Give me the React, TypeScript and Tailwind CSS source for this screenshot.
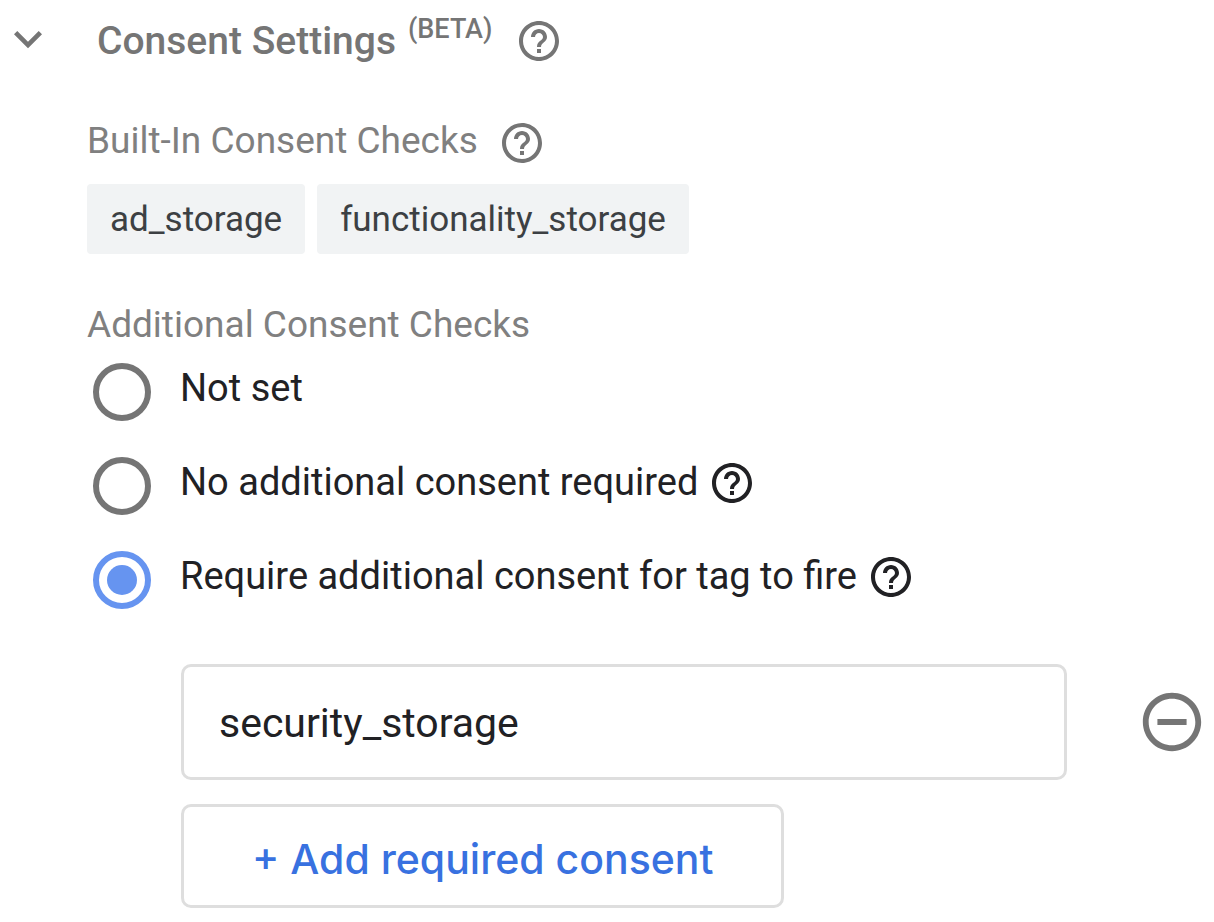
import { useState } from "react";

const HELP_PATH =
  "M11 18h2v-2h-2v2zm1-16C6.48 2 2 6.48 2 12s4.48 10 10 10 10-4.48 10-10S17.52 2 12 2zm0 18c-4.41 0-8-3.59-8-8s3.59-8 8-8 8 3.59 8 8-3.59 8-8 8zm0-14c-2.21 0-4 1.79-4 4h2c0-1.1.9-2 2-2s2 .9 2 2c0 2-3 1.75-3 5h2c0-2.25 3-2.5 3-5 0-2.21-1.79-4-4-4z";

function HelpButton({ label }: { label: string }) {
  return (
    <button type="button" aria-label={label} className="size-12 shrink-0">
      <svg viewBox="0 0 24 24" className="size-12 fill-current" aria-hidden="true">
        <path d={HELP_PATH} />
      </svg>
    </button>
  );
}

const builtInChecks = ["ad_storage", "functionality_storage"];

const options = [
  { id: "not-set", label: "Not set", help: "" },
  { id: "none-required", label: "No additional consent required", help: "About no additional consent" },
  { id: "require", label: "Require additional consent for tag to fire", help: "About requiring consent" },
];

export default function App() {
  const [choice, setChoice] = useState("require");
  const [consent, setConsent] = useState("security_storage");

  return (
    <main className="bg-white pt-[11px] pb-3 font-[Roboto,sans-serif] text-[#212124]">
      <header className="flex h-[60px] items-center text-[#757575]">
        <button
          type="button"
          aria-label="Collapse consent settings"
          className="mr-[41px] size-14 shrink-0 self-start"
        >
          <svg viewBox="0 0 24 24" className="size-14 fill-current" aria-hidden="true">
            <path d="M16.59 8.59L12 13.17 7.41 8.59 6 10l6 6 6-6z" />
          </svg>
        </button>
        <h1 className="flex items-start text-[39px] leading-14 font-medium">
          Consent Settings
          <span className="ml-3 text-[27px] leading-8">(BETA)</span>
        </h1>
        <span className="ml-[23px] flex">
          <HelpButton label="About consent settings" />
        </span>
      </header>

      <section className="mt-12 pl-[87px]">
        <div className="flex items-start gap-5 text-[#808080]">
          <h2 className="text-[37px] leading-11">Built-In Consent Checks</h2>
          <span className="flex text-[#757575]">
            <HelpButton label="About built-in consent checks" />
          </span>
        </div>
        <ul className="mt-[17px] flex flex-wrap gap-3">
          {builtInChecks.map((name) => (
            <li
              key={name}
              className="h-[70px] rounded bg-[#f1f3f4] px-[23px] text-[35px] leading-[72px] text-[#3c4043]"
            >
              {name}
            </li>
          ))}
        </ul>
      </section>

      <fieldset className="mt-[49px] pl-[87px]">
        <legend className="text-[37px] leading-11 text-[#808080]">Additional Consent Checks</legend>
        <div className="mt-4 flex flex-col gap-9 pl-1.5">
          {options.map((option) => (
            <div key={option.id} className="flex h-[58px] items-start">
              <input
                type="radio"
                id={option.id}
                name="additional-consent"
                checked={choice === option.id}
                onChange={() => setChoice(option.id)}
                className="size-[58px] shrink-0 appearance-none rounded-full border-6 border-[#757575] bg-clip-content p-2 checked:border-[#6694f0] checked:bg-[#6694f0]"
              />
              <label htmlFor={option.id} className="ml-[29px] text-[38px] leading-[50px]">
                {option.label}
              </label>
              {option.help && (
                <span className="mt-0.5 ml-2.5 flex">
                  <HelpButton label={option.help} />
                </span>
              )}
            </div>
          ))}
        </div>
      </fieldset>

      <section className="mt-[55px] pr-[7px] pl-[181px]">
        <div className="flex items-center gap-[70px]">
          <input
            type="text"
            aria-label="Required consent"
            value={consent}
            onChange={(event) => setConsent(event.target.value)}
            className="h-[116px] min-w-0 flex-1 rounded-[10px] border-3 border-[#dedede] px-[35px] pt-0.5 text-[41px]"
          />
          <button type="button" aria-label="Remove consent" className="size-[70px] shrink-0 text-[#757575]">
            <svg viewBox="0 0 24 24" className="size-[70px] fill-current" aria-hidden="true">
              <path d="M7 11v2h10v-2H7zm5-9C6.48 2 2 6.48 2 12s4.48 10 10 10 10-4.48 10-10S17.52 2 12 2zm0 18c-4.41 0-8-3.59-8-8s3.59-8 8-8 8 3.59 8 8-3.59 8-8 8z" />
            </svg>
          </button>
        </div>
        <button
          type="button"
          className="mt-6 h-[104px] rounded-[10px] border-3 border-[#dedede] px-[68px] pt-2 font-[Inter,sans-serif] text-[41px] font-medium text-[#3871e0]"
        >
          + Add required consent
        </button>
      </section>
    </main>
  );
}
